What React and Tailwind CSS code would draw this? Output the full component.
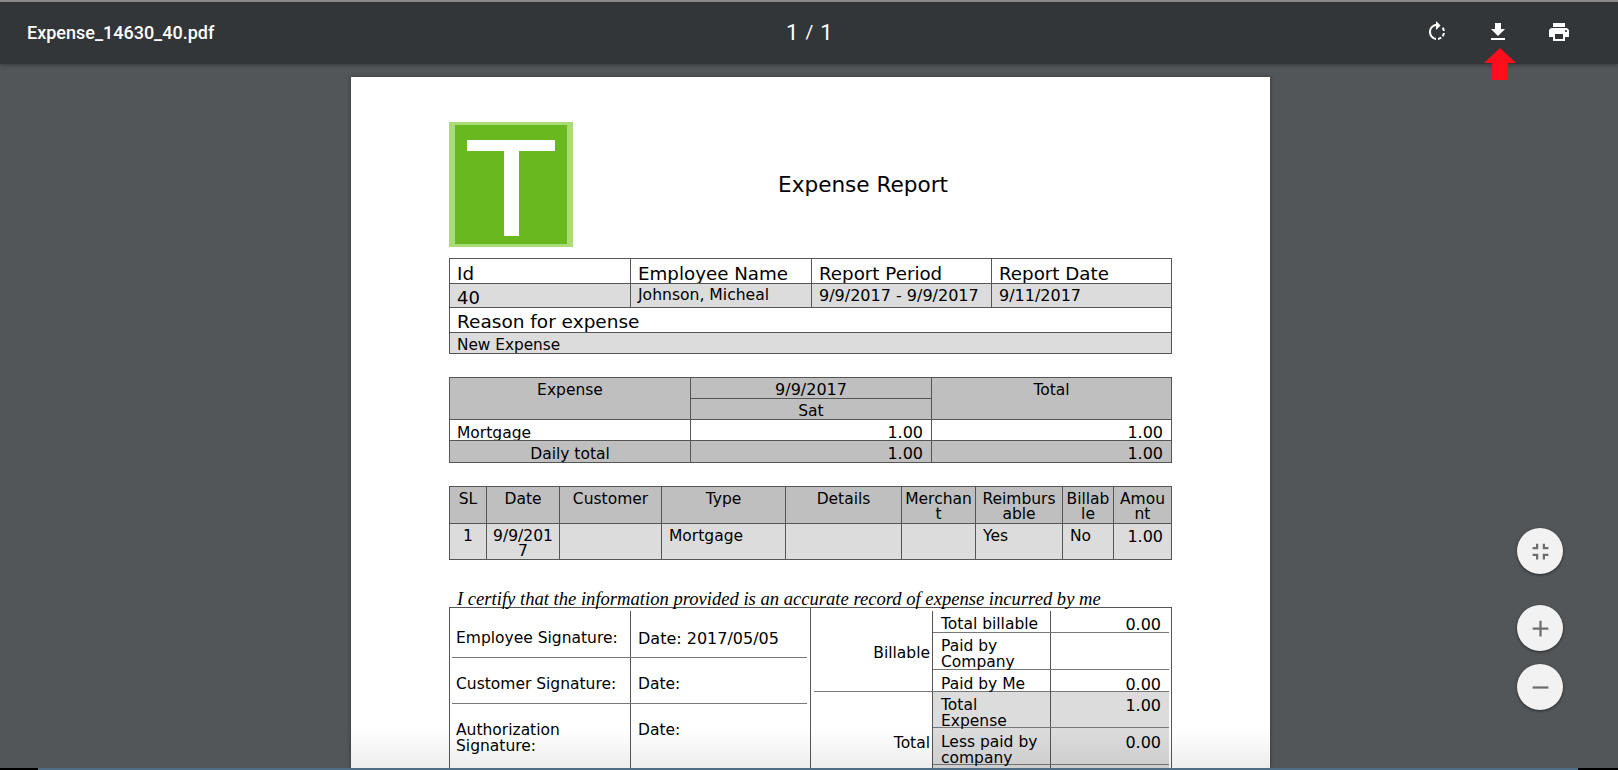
const RotateIcon = () => (
  <svg viewBox="0 0 24 24" className="w-6 h-6 fill-white">
    <path d="M15.55 5.55L11 1v3.07C7.06 4.56 4 7.92 4 12s3.05 7.44 7 7.93v-2.02c-2.84-.48-5-2.94-5-5.91s2.16-5.43 5-5.91V10l4.55-4.45zM19.93 11c-.17-1.39-.72-2.73-1.62-3.89l-1.42 1.42c.54.75.88 1.6 1.02 2.47h2.02zM13 17.9v2.02c1.39-.17 2.74-.71 3.9-1.61l-1.44-1.44c-.75.54-1.59.89-2.46 1.03zm3.89-2.42l1.42 1.41c.9-1.16 1.45-2.5 1.62-3.89h-2.02c-.14.87-.48 1.72-1.02 2.48z" />
  </svg>
);

const DownloadIcon = () => (
  <svg viewBox="0 0 24 24" className="w-6 h-6 fill-white">
    <path d="M19 9h-4V3H9v6H5l7 7 7-7zM5 18v2h14v-2H5z" />
  </svg>
);

const PrintIcon = () => (
  <svg viewBox="0 0 24 24" className="w-6 h-6 fill-white">
    <path d="M19 8H5c-1.66 0-3 1.34-3 3v6h4v4h12v-4h4v-6c0-1.66-1.34-3-3-3zm-3 11H8v-5h8v5zm3-7c-.55 0-1-.45-1-1s.45-1 1-1 1 .45 1 1-.45 1-1 1zm-1-9H6v4h12V3z" />
  </svg>
);

const Fab = ({ d, className }) => (
  <button className={`w-[46px] h-[46px] rounded-full bg-[#f2f2f2] shadow-[0_1px_3px_rgba(0,0,0,0.5)] flex items-center justify-center ${className}`}>
    <svg viewBox="0 0 24 24" className="w-[27px] h-[27px] fill-[#6e6e6e]">
      <path d={d} />
    </svg>
  </button>
);

const cell = 'border border-[#555] p-0 align-top overflow-hidden';

function HeaderTable() {
  return (
    <table className="table-fixed border-collapse w-[723px] text-black">
      <tbody>
        <tr className="h-[25px] text-[18.25px] leading-[18px]">
          <td className={`${cell} w-[181px] pl-[7px] pt-[6px]`}>Id</td>
          <td className={`${cell} w-[181px] pl-[7px] pt-[6px]`}>Employee Name</td>
          <td className={`${cell} w-[180px] pl-[7px] pt-[6px]`}>Report Period</td>
          <td className={`${cell} pl-[7px] pt-[6px]`}>Report Date</td>
        </tr>
        <tr className="h-[24px] bg-[#dcdcdc] text-[15.6px] leading-[17px]">
          <td className={`${cell} pl-[7px] pt-[5px] text-[18px]`}>40</td>
          <td className={`${cell} pl-[7px] pt-[3px]`}>Johnson, Micheal</td>
          <td className={`${cell} pl-[7px] pt-[3px] text-[16px]`}>9/9/2017 - 9/9/2017</td>
          <td className={`${cell} pl-[7px] pt-[3px] text-[16px]`}>9/11/2017</td>
        </tr>
        <tr className="h-[25px] text-[18.5px] leading-[17px]">
          <td colSpan={4} className={`${cell} pl-[7px] pt-[5px]`}>Reason for expense</td>
        </tr>
        <tr className="h-[21px] bg-[#dcdcdc] text-[15.3px] leading-[14px]">
          <td colSpan={4} className={`${cell} pl-[7px] pt-[5px]`}>New Expense</td>
        </tr>
      </tbody>
    </table>
  );
}

function SummaryTable() {
  return (
    <table className="table-fixed border-collapse w-[723px] mt-[23px] text-[15.5px] leading-[15px] text-black">
      <tbody>
        <tr className="h-[21px] bg-[#bfbfbf] text-center">
          <td rowSpan={2} className={`${cell} w-[241px] pt-[5px]`}>Expense</td>
          <td className={`${cell} w-[241px] pt-[4px] text-[16px]`}>9/9/2017</td>
          <td rowSpan={2} className={`${cell} pt-[5px]`}>Total</td>
        </tr>
        <tr className="h-[21px] bg-[#bfbfbf] text-center">
          <td className={`${cell} pt-[5px]`}>Sat</td>
        </tr>
        <tr className="h-[21px]">
          <td className={`${cell} pl-[7px] pt-[7px] leading-[13px]`}>Mortgage</td>
          <td className={`${cell} pr-2 pt-[5px] text-right text-[16px]`}>1.00</td>
          <td className={`${cell} pr-2 pt-[5px] text-right text-[16px]`}>1.00</td>
        </tr>
        <tr className="h-[22px] bg-[#bfbfbf]">
          <td className={`${cell} pt-[7px] leading-[13px] text-center`}>Daily total</td>
          <td className={`${cell} pr-2 pt-[5px] text-right text-[16px]`}>1.00</td>
          <td className={`${cell} pr-2 pt-[5px] text-right text-[16px]`}>1.00</td>
        </tr>
      </tbody>
    </table>
  );
}

const lineCols = [
  { w: 'w-[37px]', head: ['SL'] },
  { w: 'w-[73px]', head: ['Date'] },
  { w: 'w-[102px]', head: ['Customer'] },
  { w: 'w-[124px]', head: ['Type'] },
  { w: 'w-[116px]', head: ['Details'] },
  { w: 'w-[74px]', head: ['Merchan', 't'] },
  { w: 'w-[87px]', head: ['Reimburs', 'able'] },
  { w: 'w-[51px]', head: ['Billab', 'le'] },
  { w: '', head: ['Amou', 'nt'] },
];

function LinesTable() {
  return (
    <table className="table-fixed border-collapse w-[723px] mt-[23px] text-[15.5px] leading-[15px] text-black">
      <tbody>
        <tr className="h-[37px] bg-[#bfbfbf] text-center">
          {lineCols.map((c) => (
            <td key={c.head[0]} className={`${cell} ${c.w} pt-[5px] whitespace-nowrap`}>
              {c.head[0]}
              {c.head[1] && <br />}
              {c.head[1]}
            </td>
          ))}
        </tr>
        <tr className="h-[36px] bg-[#dcdcdc]">
          <td className={`${cell} pt-[5px] text-center`}>1</td>
          <td className={`${cell} pt-[5px] text-center whitespace-nowrap`}>9/9/201<br />7</td>
          <td className={cell}></td>
          <td className={`${cell} pt-[5px] pl-[7px]`}>Mortgage</td>
          <td className={cell}></td>
          <td className={cell}></td>
          <td className={`${cell} pt-[5px] pl-[7px]`}>Yes</td>
          <td className={`${cell} pt-[5px] pl-[7px]`}>No</td>
          <td className={`${cell} pt-[5px] pr-2 text-right text-[16px]`}>1.00</td>
        </tr>
      </tbody>
    </table>
  );
}

function SignatureTable() {
  const rule = 'border-b border-[#777]';
  return (
    <div className="flex w-[723px] h-[170px] border border-b-0 border-[#555] text-[15.5px] leading-[15.5px] text-black">
      {/* left half */}
      <div className="w-[361px] border-r border-[#555] pt-[3px] pl-[2px] pr-[3px] shrink-0">
        <div className={`flex h-[47px] ${rule}`}>
          <div className="w-[179px] border-r border-[#555] pl-1 pt-[20px]">Employee Signature:</div>
          <div className="pl-[7px] pt-[20px] text-[16px]">Date: 2017/05/05</div>
        </div>
        <div className={`flex h-[46px] ${rule}`}>
          <div className="w-[179px] border-r border-[#555] pl-1 pt-[19px]">Customer Signature:</div>
          <div className="pl-[7px] pt-[19px]">Date:</div>
        </div>
        <div className="flex h-[70px]">
          <div className="w-[179px] border-r border-[#555] pl-1 pt-[19px]">Authorization<br />Signature:</div>
          <div className="pl-[7px] pt-[19px]">Date:</div>
        </div>
      </div>

      {/* right half */}
      <div className="flex-1 pt-[3px] pl-[3px] pr-[2px]">
        <div className={`flex h-[81px] ${rule}`}>
          <div className="w-[119px] text-right pr-[2px] pt-[35px] border-r border-[#555]">Billable</div>
          <div className="flex-1 flex flex-col">
            <div className={`flex h-[22px] ${rule}`}>
              <div className="w-[118px] border-r border-[#555] pl-2 pt-[6px]">Total billable</div>
              <div className="flex-1 text-right pr-2 pt-[6px] text-[16px]">0.00</div>
            </div>
            <div className={`flex h-[37px] ${rule}`}>
              <div className="w-[118px] border-r border-[#555] pl-2 pt-[6px]">Paid by<br />Company</div>
            </div>
            <div className="flex h-[22px]">
              <div className="w-[118px] border-r border-[#555] pl-2 pt-[7px]">Paid by Me</div>
              <div className="flex-1 text-right pr-2 pt-[7px] text-[16px]">0.00</div>
            </div>
          </div>
        </div>
        <div className="flex h-[85px]">
          <div className="w-[119px] text-right pr-[2px] pt-[44px] border-r border-[#555]">Total</div>
          <div className="flex-1 flex flex-col bg-[#dcdcdc]">
            <div className={`flex h-[36px] ${rule}`}>
              <div className="w-[118px] border-r border-[#555] pl-2 pt-[6px]">Total<br />Expense</div>
              <div className="flex-1 text-right pr-2 pt-[6px] text-[16px]">1.00</div>
            </div>
            <div className={`flex h-[37px] ${rule}`}>
              <div className="w-[118px] border-r border-[#555] pl-2 pt-[7px]">Less paid by<br />company</div>
              <div className="flex-1 text-right pr-2 pt-[7px] text-[16px]">0.00</div>
            </div>
            <div className="flex flex-1">
              <div className="w-[118px] border-r border-[#555]"></div>
            </div>
          </div>
        </div>
      </div>
    </div>
  );
}

export default function App() {
  return (
    <div className="relative h-[770px] flex flex-col overflow-hidden bg-[#525659] font-['DejaVu_Sans',sans-serif]">
      <header className="relative z-10 h-[64px] shrink-0 bg-[#323639] border-t-2 border-[#8a8a8a] flex items-center pl-[27px] pb-[2px] text-white shadow-[0_1px_4px_rgba(0,0,0,0.35)]">
        <div className="w-[759px] font-['Roboto',sans-serif] text-[18px] font-medium">Expense_14630_40.pdf</div>
        <div className="flex items-center gap-[7px] font-['Roboto',sans-serif] text-[22px]">
          <span>1</span>
          <span className="text-[19px]">/</span>
          <span>1</span>
        </div>
        <div className="ml-auto flex items-center gap-[37px] pr-[47px]">
          <RotateIcon />
          <DownloadIcon />
          <PrintIcon />
        </div>
      </header>

      <main className="flex-1 min-h-0 overflow-hidden pt-[13px] pl-[351px]">
        <div className="relative w-[919px] h-full overflow-hidden bg-white pt-[45px] pl-[98px] shadow-[0_0_4px_rgba(0,0,0,0.4)]">
          <div className="flex h-[136px]">
            <div className="w-[124px] h-[125px] bg-[#6ab820] border-x-[6px] border-y-[3px] border-[#a9dc77] flex flex-col items-center pt-[15px]">
              <div className="w-[88px] h-[11px] bg-white shrink-0"></div>
              <div className="w-[15px] h-[85px] bg-white shrink-0"></div>
            </div>
            <h1 className="ml-[205px] mt-[49px] text-[21.6px] leading-[28px] text-black">Expense Report</h1>
          </div>
          <HeaderTable />
          <SummaryTable />
          <LinesTable />
          <p className="mt-[31px] h-[16px] pl-[8px] font-['Liberation_Serif',serif] italic text-[18.6px] leading-[16px] whitespace-nowrap text-black">
            I certify that the information provided is an accurate record of expense incurred by me
          </p>
          <SignatureTable />
          {/* fade at the bottom of the sheet */}
          <div className="absolute left-0 bottom-0 w-full h-[40px] bg-gradient-to-b from-transparent to-black/[0.07] pointer-events-none"></div>
        </div>
      </main>

      <footer className="h-[2px] shrink-0 flex">
        <div className="w-[38px] bg-black"></div>
        <div className="flex-1 bg-[#4f6d85]"></div>
        <div className="w-[40px] bg-black"></div>
      </footer>

      {/* red arrow pointing at the download button */}
      <svg viewBox="0 0 32 32" className="absolute left-[1484px] top-[48px] w-[32px] h-[32px] z-20">
        <path d="M16 0L32 15H24V32H8V15H0z" fill="#ff0d1c" />
      </svg>

      <Fab className="absolute left-[1517px] top-[528px]" d="M5 16h3v3h2v-5H5v2zm3-8H5v2h5V5H8v3zm6 11h2v-3h3v-2h-5v5zm2-11V5h-2v5h5V8h-3z" />
      <Fab className="absolute left-[1517px] top-[605px]" d="M19 13h-6v6h-2v-6H5v-2h6V5h2v6h6v2z" />
      <Fab className="absolute left-[1517px] top-[664px]" d="M19 13H5v-2h14v2z" />
    </div>
  );
}
